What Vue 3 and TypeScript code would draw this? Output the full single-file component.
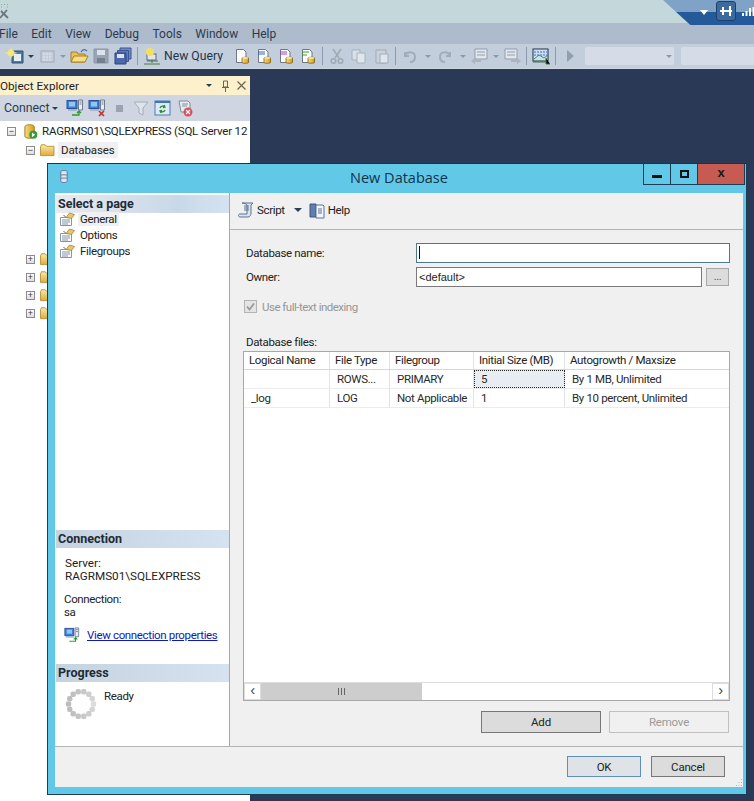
<script setup lang="ts">
const menus: string[] = ['File', 'Edit', 'View', 'Debug', 'Tools', 'Window', 'Help']
const spinner = Array.from({ length: 14 }, (_, i) => {
  const a = (i / 14) * Math.PI * 2
  return { x: 16 + Math.cos(a) * 12.5, y: 16 + Math.sin(a) * 12.5, o: 0.55 + 0.45 * Math.abs(Math.sin(a / 2)) }
})
const headers = [
  { t: 'Logical Name', c: 'c1' },
  { t: 'File Type', c: 'c2' },
  { t: 'Filegroup', c: 'c3' },
  { t: 'Initial Size (MB)', c: 'c4' },
  { t: 'Autogrowth / Maxsize', c: 'c5' }
]
const rows = [
  ['', 'ROWS...', 'PRIMARY', '5', 'By 1 MB, Unlimited'],
  ['_log', 'LOG', 'Not Applicable', '1', 'By 10 percent, Unlimited']
]
const cols = ['c1', 'c2', 'c3', 'c4', 'c5']
</script>

<template>
  <div class="screen">
    <svg class="defs" width="0" height="0">
      <defs>
        <linearGradient id="folderG" x1="0" y1="0" x2="0" y2="1"><stop offset="0" stop-color="#fbeaa8"/><stop offset="1" stop-color="#e0aa3c"/></linearGradient>
        <linearGradient id="dbG" x1="0" y1="0" x2="1" y2="0"><stop offset="0" stop-color="#f6dc84"/><stop offset="1" stop-color="#d99a1c"/></linearGradient>
        <symbol id="page" viewBox="0 0 16 16">
          <path d="M1.500 6.500h11v8h-11z" fill="#fff" stroke="#8a94a2"/>
          <path d="M3 9h8M3 11h8M3 13h6" stroke="#7f93ad"/>
          <path d="M7 6.500 10.500 2l5 1.500-3 4z" fill="#e8c860" stroke="#8c7a3a" stroke-width=".7"/>
          <path d="M6.500 6 4.500 4" stroke="#5c6672"/>
        </symbol>
        <symbol id="folder" viewBox="0 0 16 14">
          <path d="M.5 3V12.500h14.500V2.500H7L5.500.8H1.500z" fill="url(#folderG)" stroke="#b99238"/>
        </symbol>
        <symbol id="dbdoc" viewBox="0 0 16 16">
          <path d="M2.500 1.500h7l2.500 2.500v10.500h-9.500z" fill="#fdfdfd" stroke="#6d7786"/>
          <path d="M8 10c0-1 6.500-1 6.500 0v4.500c0 1-6.500 1-6.500 0z" fill="url(#dbG)" stroke="#7c5a0c" stroke-width=".8"/>
          <ellipse cx="11.250" cy="10" rx="3.200" ry="1" fill="#f8e79a"/>
        </symbol>
        <symbol id="network" viewBox="0 0 18 18">
          <rect x="1" y="1.500" width="10" height="8" fill="#3d82dd" stroke="#2b4f94"/>
          <rect x="3" y="3" width="6" height="4.500" fill="#8fc6f2"/>
          <rect x="2" y="10" width="9" height="2" fill="#aab6c6"/>
          <path d="M12.500 1h4v10h-4z" fill="#e8edf3" stroke="#6e7c90"/>
          <path d="M13.500 3h2M13.500 5h2" stroke="#6e7c90"/>
        </symbol>
      </defs>
    </svg>

    <header class="title-strip">
      <svg class="app-logo" viewBox="0 0 10 15" width="10" height="15">
        <path d="M0 14 7 6M1 7l7 7" stroke="#6c757e" stroke-width="1.800"/>
        <path d="M1 .5h1M4 .5h1M7 .5h1M1 3h1M7 3h1" stroke="#86b27a"/>
      </svg>
      <div class="account">
        <span class="acc-arrow"></span>
        <span class="acc-btn">
          <svg viewBox="0 0 14 10" width="14" height="10"><path d="M1 4h12v2H1zM3 1h2v8H3zM10 0h2v10h-2z" fill="#fff"/></svg>
        </span>
        <svg class="acc-bars" viewBox="0 0 12 9" width="12" height="9"><path d="M0 6h2v3H0zM3.500 4h2v5h-2zM7 1h2v8H7zM10.500 0H12v9h-1.500z" fill="#fff"/></svg>
      </div>
    </header>

    <nav class="menu-bar">
      <span v-for="m in menus" :key="m" class="menu-item">{{ m }}</span>
    </nav>

    <div class="toolbar">
      <svg class="tool" viewBox="0 0 22 18"><path d="M8 4h11v12H8z" fill="#4f7ba6" stroke="#33506e"/><path d="M10 7h7v7h-7z" fill="#e6eef5"/><circle cx="7" cy="6" r="3.500" fill="#f6e36a"/><path d="M7 .5v11M1.500 6h11" stroke="#f6e98e"/></svg>
      <span class="dd"></span>
      <svg class="tool dim" viewBox="0 0 22 18"><rect x="5" y="4" width="13" height="11" fill="#c6cfda" stroke="#9aa6b4"/><path d="M7 7h9M7 10h9M7 13h9" stroke="#e6ecf2" stroke-dasharray="2 1"/></svg>
      <span class="dd dim-dd gap-r"></span>
      <svg class="tool" viewBox="0 0 22 18"><path d="M3 15V5h6l1 2h7v8z" fill="#e8c25a" stroke="#a67f26"/><path d="M3 15 6 9h14l-3 6z" fill="#f7dd84" stroke="#a67f26"/><path d="M13 5c2-3 4-3 6-1" stroke="#3f6fa8" fill="none" stroke-width="1.300"/></svg>
      <svg class="tool" viewBox="0 0 22 18"><path d="M4 2h14v14H4z" fill="#98a4b4" stroke="#8b96a6"/><path d="M7 3h8v5H7z" fill="#dde3ea"/><path d="M7 11h8v5H7z" fill="#75818f"/></svg>
      <svg class="tool" viewBox="0 0 22 18"><path d="M8 1h11v11H8z" fill="#6f8cc6" stroke="#3c5391"/><path d="M5.500 3.500h11v11h-11z" fill="#5f7dbd" stroke="#3c5391"/><path d="M3 6h11v11H3z" fill="#4a68ab" stroke="#2e437f"/><path d="M5 7h7v4H5z" fill="#d9e2f2"/></svg>
      <span class="sep"></span>
      <svg class="tool" viewBox="0 0 22 18"><path d="M6 14h11M11 11v5M3 17h16" stroke="#4d7a3c"/><rect x="6" y="7" width="9" height="6" fill="#dfe6ee" stroke="#59677a"/><circle cx="9" cy="5" r="4" fill="#f4df5c"/></svg>
      <span class="nq">New Query</span>
      <svg class="tool" viewBox="0 0 22 18"><use href="#dbdoc" x="3" y="1" width="16" height="16"/></svg>
      <svg class="tool" viewBox="0 0 22 18"><use href="#dbdoc" x="3" y="1" width="16" height="16"/><path d="M5 5h7M5 7h7" stroke="#2f6ac0"/></svg>
      <svg class="tool" viewBox="0 0 22 18"><use href="#dbdoc" x="3" y="1" width="16" height="16"/><path d="M5 5h7M5 7h7" stroke="#a63ec0"/></svg>
      <svg class="tool" viewBox="0 0 22 18"><use href="#dbdoc" x="3" y="1" width="16" height="16"/><path d="M5 5h7M5 8h5" stroke="#3e9a3a"/></svg>
      <span class="sep"></span>
      <svg class="tool dim" viewBox="0 0 22 18"><path d="M7 2l6 9M15 2l-6 9" stroke="#9aa3ae" stroke-width="1.500"/><circle cx="7.500" cy="14" r="2.300" fill="none" stroke="#9aa3ae" stroke-width="1.500"/><circle cx="14.500" cy="14" r="2.300" fill="none" stroke="#9aa3ae" stroke-width="1.500"/></svg>
      <svg class="tool dim" viewBox="0 0 22 18"><path d="M4 3h8v10H4z" fill="#dce2ea" stroke="#a4adb9"/><path d="M9 6h8v10H9z" fill="#e6ebf1" stroke="#a4adb9"/></svg>
      <svg class="tool dim" viewBox="0 0 22 18"><path d="M6 3h10v13H6z" fill="#ccd3dd" stroke="#9da7b4"/><path d="M10 7h8v9h-8z" fill="#e6ebf1" stroke="#9da7b4"/></svg>
      <span class="sep"></span>
      <svg class="tool dim" viewBox="0 0 22 18"><path d="M6 5v4h4M6 9c2-5 10-5 10 1 0 3-2 5-5 5" fill="none" stroke="#9ca7b5" stroke-width="2"/></svg>
      <span class="dd dim-dd wide"></span>
      <svg class="tool dim" viewBox="0 0 22 18"><path d="M16 5v4h-4M16 9c-2-5-10-5-10 1 0 3 2 5 5 5" fill="none" stroke="#9ca7b5" stroke-width="2"/></svg>
      <span class="dd dim-dd wide"></span>
      <svg class="tool dim" viewBox="0 0 22 18"><path d="M6 2h12v10H6z" fill="#e8ecf1" stroke="#8995a5"/><path d="M8 5h8M8 8h8" stroke="#8995a5"/><path d="M2 14l4-3v2h6v2H6v2z" fill="#a6afbb"/></svg>
      <span class="dd dim-dd"></span>
      <svg class="tool dim" viewBox="0 0 22 18"><path d="M4 2h12v10H4z" fill="#e8ecf1" stroke="#8995a5"/><path d="M6 5h8M6 8h8" stroke="#8995a5"/><path d="M20 14l-4-3v2h-6v2h6v2z" fill="#a6afbb"/></svg>
      <span class="sep"></span>
      <svg class="tool" viewBox="0 0 22 18"><rect x="3" y="2" width="15" height="12" fill="#cfe0f4" stroke="#20304f"/><path d="M4 5h13M4 8h13" stroke="#3e6cbc" stroke-dasharray="2 1"/><path d="M4 12l5-4 5 3 4-3" fill="none" stroke="#3a9a48"/><path d="M16 11v6h4M3 15h13" stroke="#3a7d2e"/></svg>
      <span class="sep"></span>
      <svg class="tool" viewBox="0 0 22 18"><path d="M8 3l7 6-7 6z" fill="#929eae"/></svg>
      <span class="combo first"><span class="dd dim-dd"></span></span>
      <span class="combo second"></span>
    </div>

    <main class="workspace">
      <aside class="explorer">
        <div class="oe-head">
          <span class="oe-title">Object Explorer</span>
          <span class="oe-pin">
            <span class="dd dark"></span>
            <svg viewBox="0 0 9 12" width="9" height="12"><path d="M2.500 1h4v6h-4zM1 7.500h7M4.500 8v4" fill="none" stroke="#6b6552"/></svg>
            <svg viewBox="0 0 9 9" width="9" height="9"><path d="M.5.5l8 8M8.500.5l-8 8" stroke="#6b6552" stroke-width="1.200"/></svg>
          </span>
        </div>
        <div class="oe-tools">
          <span class="oe-connect">Connect</span>
          <span class="dd dark"></span>
          <svg class="oe-ic first" viewBox="0 0 18 18"><use href="#network" width="18" height="18"/><path d="M6 16h7v-4M11 14l2-2 2 2" fill="none" stroke="#2c9a32" stroke-width="1.300"/></svg>
          <svg class="oe-ic" viewBox="0 0 18 18"><use href="#network" width="18" height="18"/><path d="M11 12l5 5M16 12l-5 5" stroke="#d0282a" stroke-width="1.600"/></svg>
          <svg class="oe-ic" viewBox="0 0 18 18"><rect x="6" y="6" width="7" height="7" fill="#9aa3af"/></svg>
          <svg class="oe-ic" viewBox="0 0 18 18"><path d="M2 3h14l-5 6v7l-4-2V9z" fill="#dfe4ea" stroke="#a3acb8"/></svg>
          <svg class="oe-ic" viewBox="0 0 18 18"><rect x="1" y="2" width="15" height="14" fill="#dbe9f8" stroke="#4a7ab4"/><path d="M1 2h15v2H1z" fill="#3f74b8"/><path d="M6 9a3 3 0 0 1 5-1M11 11a3 3 0 0 1-5 1M10 6l1 2-2 .5M7 14l-1-2 2-.5" fill="none" stroke="#2e8a2c" stroke-width="1.300"/></svg>
          <svg class="oe-ic" viewBox="0 0 18 18"><path d="M3 2h9l2 2v9H5z" fill="#e8ecf2" stroke="#7f8a99"/><path d="M6 5h6M6 7h5" stroke="#7f8a99"/><circle cx="12" cy="13" r="4.500" fill="#d8505a"/><path d="M10 11l4 4M14 11l-4 4" stroke="#fff" stroke-width="1.200"/></svg>
        </div>
        <div class="tree">
          <div class="tree-row lvl0">
            <span class="exp">−</span>
            <svg class="tree-ic" viewBox="0 0 16 16"><path d="M2 3c0-3 10-3 10 0v10c0 3-10 3-10 0z" fill="url(#dbG)" stroke="#9c7a1c"/><circle cx="11" cy="11.500" r="4.300" fill="#2f9e3a"/><path d="M9.500 9l3.500 2.500L9.500 14z" fill="#fff"/></svg>
            <span class="tree-label">RAGRMS01\SQLEXPRESS (SQL Server 12</span>
          </div>
          <div class="tree-row lvl1">
            <span class="exp">−</span>
            <svg class="folder" viewBox="0 0 16 14"><use href="#folder" width="16" height="14"/></svg>
            <span class="tree-label selected">Databases</span>
          </div>
          <div class="tree-spacer"></div>
          <div v-for="n in 4" :key="n" class="tree-row lvl1 short">
            <span class="exp">+</span>
            <svg class="folder" viewBox="0 0 16 14"><use href="#folder" width="16" height="14"/></svg>
          </div>
        </div>
      </aside>

      <section class="dialog">
        <div class="dlg-title">
          <svg class="dlg-ic" viewBox="0 0 10 16" width="8" height="15"><path d="M1 2c0-2 8-2 8 0v12c0 2-8 2-8 0z" fill="#dfe6f0" stroke="#54688a"/><path d="M1 6h8M1 10h8" stroke="#54688a"/></svg>
          <span class="dlg-name">New Database</span>
          <div class="win-btns">
            <span class="wb min"><i></i></span>
            <span class="wb max"><i></i></span>
            <span class="wb close">x</span>
          </div>
        </div>

        <div class="dlg-client">
          <div class="dlg-body">
            <aside class="side">
              <div class="side-top">
                <h3 class="side-h first">Select a page</h3>
                <div class="page-row"><svg class="p-ic" viewBox="0 0 16 16"><use href="#page" width="16" height="16"/></svg><span class="active">General</span></div>
                <div class="page-row"><svg class="p-ic" viewBox="0 0 16 16"><use href="#page" width="16" height="16"/></svg><span>Options</span></div>
                <div class="page-row"><svg class="p-ic" viewBox="0 0 16 16"><use href="#page" width="16" height="16"/></svg><span>Filegroups</span></div>
              </div>
              <h3 class="side-h">Connection</h3>
              <div class="conn">
                <div class="conn-l upper">Server:<br />RAGRMS01\SQLEXPRESS</div>
                <div class="conn-l second">Connection:<br />sa</div>
                <div class="conn-link">
                  <svg viewBox="0 0 18 18" width="16" height="16"><use href="#network" width="18" height="18"/><path d="M6 16h7v-4M11 14l2-2 2 2" fill="none" stroke="#2c9a32" stroke-width="1.300"/></svg>
                  <a>View connection properties</a>
                </div>
              </div>
              <h3 class="side-h">Progress</h3>
              <div class="progress">
                <svg viewBox="0 0 32 32" width="32" height="32">
                  <rect v-for="(s, i) in spinner" :key="i" :x="s.x - 2.700" :y="s.y - 2.700" width="5.400" height="5.400" rx="2" fill="#bdbdbd" :opacity="s.o" />
                </svg>
                <span>Ready</span>
              </div>
            </aside>

            <div class="pane">
              <div class="script-bar">
                <svg class="scr-ic" viewBox="0 0 18 18" width="18" height="18"><path d="M5 2h11l-2 2v8c0 2-1 4-3 4H3c-2 0-2-3 0-3h7V4c0-1-3-2-5-2z" fill="#dbe5f0" stroke="#5a7294"/><path d="M7 5h5M7 7h5M7 9h5" stroke="#5a7294"/></svg>
                <span class="scr-t">Script</span>
                <span class="dd dark scr-dd"></span>
                <svg class="help-ic" viewBox="0 0 16 17" width="16" height="17"><path d="M1 2h6v13H1z" fill="#5f7fb0" stroke="#3b5580"/><path d="M7 3h7l1 1v12H7z" fill="#f2f5fa" stroke="#5c7092"/><path d="M9 7h4M9 9h4M9 11h4" stroke="#5c7092"/></svg>
                <span class="scr-t">Help</span>
              </div>

              <div class="form">
                <div class="f-row name-row">
                  <label>Database name:</label>
                  <div class="input focus"><span class="caret"></span></div>
                </div>
                <div class="f-row owner-row">
                  <label>Owner:</label>
                  <div class="input owner">&lt;default&gt;</div>
                  <span class="browse">...</span>
                </div>
                <div class="chk-row">
                  <svg class="chk" viewBox="0 0 13 13" width="13" height="13"><rect x=".5" y=".5" width="12" height="12" fill="#e4e4e4" stroke="#b4b4b4"/><path d="M3 6.500l2.500 3L10 3.500" fill="none" stroke="#9c9c9c" stroke-width="1.800"/></svg>
                  <span>Use full-text indexing</span>
                </div>
                <div class="files-l">Database files:</div>
                <div class="grid-box">
                  <div class="g-row g-head">
                    <div v-for="h in headers" :key="h.t" class="g-cell" :class="h.c">{{ h.t }}</div>
                  </div>
                  <div v-for="(r, ri) in rows" :key="ri" class="g-row">
                    <div v-for="(v, ci) in r" :key="ci" class="g-cell data" :class="[cols[ci], { cur: ri === 0 && ci === 3 }]">{{ v }}</div>
                  </div>
                  <div class="g-fill"></div>
                  <div class="hscroll">
                    <span class="sb-btn">‹</span>
                    <span class="sb-thumb">
                      <svg viewBox="0 0 7 7" width="7" height="7"><path d="M.5 0v7M3.500 0v7M6.500 0v7" stroke="#666"/></svg>
                    </span>
                    <span class="sb-track"></span>
                    <span class="sb-btn">›</span>
                  </div>
                </div>
                <div class="add-row">
                  <span class="btn add">Add</span>
                  <span class="btn off">Remove</span>
                </div>
              </div>
            </div>
          </div>
          <footer class="dlg-foot">
            <span class="btn ok">OK</span>
            <span class="btn cancel">Cancel</span>
            <svg class="grip" viewBox="0 0 9 9" width="9" height="9"><path d="M7 1h1v1H7zM4.500 4h1v1h-1zM7 4h1v1H7zM2 7h1v1H2zM4.500 7h1v1h-1zM7 7h1v1H7z" fill="#b8b8b8"/></svg>
          </footer>
        </div>
      </section>
    </main>
  </div>
</template>

<style>
html, body { margin: 0; padding: 0; background: #2a3a56; overflow: hidden; }
</style>

<style scoped>
.screen { width: 754px; height: 801px; display: flex; flex-direction: column; overflow: hidden; font-family: Roboto, "Liberation Sans", sans-serif; font-size: 11.5px; letter-spacing: -0.35px; color: #222; background: #2a3a56; }
.defs { position: absolute; }
.title-strip { height: 23px; background: #c4d7db; position: relative; flex: none; }
.app-logo { position: absolute; left: 0; top: 4px; }
.account { position: absolute; top: 0; right: 0; width: 91px; height: 25px; background: linear-gradient(#7ea3c6 0 46%, #245a9a 46% 100%); clip-path: polygon(0 0, 100% 0, 100% 100%, 30% 100%); z-index: 2; display: flex; align-items: center; }
.acc-arrow { margin-left: 37px; margin-bottom: 1px; border: 4px solid transparent; border-top: 5px solid #fff; border-bottom: 0; }
.acc-btn { margin-left: 8px; margin-top: -3px; width: 20px; height: 20px; border: 1px solid #1f3f6e; border-radius: 3px; box-sizing: border-box; display: flex; align-items: center; justify-content: center; background: #3c6a9f; }
.acc-bars { margin-left: 6px; margin-top: -2px; flex: none; }
.menu-bar { height: 21px; background: #aebbcc; display: flex; align-items: center; flex: none; font-size: 12px; letter-spacing: 0; color: #2c3a4c; }
.menu-item { margin-left: 13.500px; }
.menu-item:first-child { margin-left: -1px; }
.toolbar { height: 25px; background: #c2cedb; flex: none; display: flex; align-items: center; padding-left: 4px; border-bottom: 1px solid #cdd6e0; box-sizing: border-box; }
.tool { width: 22px; height: 18px; flex: none; }
.dim { opacity: .85; }
.dd { width: 0; height: 0; margin: 0 2px; border: 3px solid transparent; border-top: 3px solid #2f3d52; border-bottom: 0; flex: none; }
.dim-dd { border-top-color: #8d99a8; }
.toolbar > .gap-r { margin-right: 2px; }
.toolbar > .wide { margin: 0 2.500px 0 4.500px; }
.sep { width: 1px; height: 18px; background: #8e9aab; margin: 0 3px; flex: none; }
.nq { margin: 0 8px 0 1px; font-size: 12.200px; letter-spacing: 0; color: #26344a; white-space: nowrap; }
.combo { height: 18px; background: #d5dce7; border-radius: 2px; flex: none; display: flex; align-items: center; justify-content: flex-end; }
.combo.first { width: 89px; margin-left: 4px; }
.combo.second { width: 80px; margin-left: 7px; }
.workspace { flex: 1; position: relative; padding-top: 7px; }
.explorer { width: 250px; height: 100%; background: #fff; display: flex; flex-direction: column; border-radius: 2px 2px 0 0; }
.oe-head { height: 19px; background: #fdf0cc; display: flex; align-items: center; justify-content: space-between; flex: none; color: #1f1f1f; }
.oe-title { font-size: 11.700px; letter-spacing: 0; }
.oe-pin { display: flex; align-items: center; gap: 7px; padding-right: 4px; }
.oe-tools { height: 26px; background: #cfd6e1; display: flex; align-items: center; padding-left: 4px; flex: none; }
.oe-connect { color: #2a3a4c; font-size: 12.300px; letter-spacing: 0; }
.oe-ic { width: 18px; height: 18px; margin-left: 4px; flex: none; }
.oe-ic.first { margin-left: 6px; }
.tree { flex: 1; }
.tree-row { height: 18px; display: flex; align-items: center; }
.lvl0 { padding-left: 7px; height: 20px; }
.lvl1 { padding-left: 26px; }
.exp { width: 7px; height: 7px; border: 1px solid #8b8b8b; background: linear-gradient(#fff, #ddd); font-size: 9px; line-height: 7px; text-align: center; color: #333; flex: none; font-family: "Liberation Sans", sans-serif; letter-spacing: 0; }
.tree-ic { width: 15px; height: 15px; margin-left: 7px; flex: none; }
.folder { width: 15px; height: 13px; margin-left: 5px; flex: none; }
.tree-label { margin-left: 4px; white-space: nowrap; letter-spacing: -0.2px; }
.selected { background: #f0f0f0; padding: 1px 3px; margin-left: 3px; letter-spacing: -0.1px; }
.tree-spacer { height: 91px; }
.short { height: 18px; }
.dialog { position: absolute; left: 47px; top: 94px; width: 700px; height: 632px; box-sizing: border-box; border: 1px solid #1b3d55; border-top-color: #16364e; background: #62c8e8; display: flex; flex-direction: column; padding: 0 3px 7px 7px; }
.dlg-title { height: 29px; position: relative; flex: none; display: flex; align-items: center; justify-content: center; }
.dlg-ic { position: absolute; left: 5px; top: 5px; }
.dlg-name { font-size: 14.500px; letter-spacing: 0; color: #10344a; margin: 0 0 3px 0; font-family: "Open Sans", sans-serif; }
.win-btns { position: absolute; top: 0; right: -2px; display: flex; height: 20px; border: 1px solid #1b3d55; border-top: 0; }
.wb { display: flex; align-items: center; justify-content: center; width: 27px; box-sizing: border-box; border-right: 1px solid #1b3d55; }
.wb.close { width: 46px; border-right: 0; background: #c75b52; font-weight: 700; font-family: "Liberation Sans", sans-serif; font-size: 13px; color: #1a1a1a; line-height: 1; padding-bottom: 3px; }
.wb.min i { width: 10px; height: 3px; margin-top: 5px; background: #111; }
.wb.max i { width: 9px; height: 8px; box-sizing: border-box; border: 2px solid #111; }
.dlg-client { flex: 1; background: #f0f0f0; display: flex; flex-direction: column; min-height: 0; }
.dlg-body { flex: 1; display: flex; min-height: 0; border-bottom: 1px solid #b4b4b4; }
.side { width: 173px; background: #fff; border-right: 1px solid #a8a8a8; display: flex; flex-direction: column; flex: none; margin-left: 1px; }
.side-top { height: 337px; padding-top: 2px; box-sizing: border-box; flex: none; }
.side-h { margin: 0; height: 18px; line-height: 18px; font-size: 12.500px; letter-spacing: 0; font-weight: 700; padding-left: 2px; background: linear-gradient(90deg, #c5d3e0, #d5e3f0); color: #1e2a36; }
.side-h.first { background: linear-gradient(90deg, #e8eaee, #c9d8e8 70%, #d5e3f0); margin-bottom: -2px; }
.page-row { height: 16px; display: flex; align-items: center; padding-left: 3px; }
.p-ic { width: 16px; height: 16px; margin-right: 5px; flex: none; }
.active { background: #f0f0f0; padding: 0 2px; margin-left: -2px; }
.conn { height: 116px; padding: 9px 0 0 8px; box-sizing: border-box; flex: none; line-height: 13px; }
.conn-l { padding-left: 1px; }
.upper { font-size: 11.700px; letter-spacing: 0; }
.conn-l.second { margin-top: 10px; padding-left: 0; }
.conn-link { display: flex; align-items: center; gap: 7px; margin-top: 8px; }
.conn-link a { color: #0f19b8; text-decoration: underline; white-space: nowrap; }
.progress { flex: 1; display: flex; padding: 6px 0 0 9px; gap: 7px; }
.progress span { margin-top: 1px; }
.pane { flex: 1; display: flex; flex-direction: column; min-width: 0; }
.script-bar { height: 37px; box-sizing: border-box; border-bottom: 1px solid #b4b4b4; display: flex; align-items: center; padding: 0 0 2px 7px; flex: none; }
.scr-t { margin-left: 3px; }
.scr-ic + .scr-t { margin-left: 2px; }
.scr-dd { margin: 0 7px 0 9px; }
.scr-dd.dd { border-width: 4px 4px 0; }
.form { flex: 1; display: flex; flex-direction: column; padding: 12px 13px 0 14px; min-height: 0; }
.f-row { display: flex; align-items: center; }
.f-row label { width: 172px; flex: none; padding-left: 2px; box-sizing: border-box; }
.name-row { height: 21px; }
.owner-row { height: 21px; margin-top: 3px; }
.input { height: 20px; box-sizing: border-box; border: 1px solid #4b7a96; background: #fff; flex: 1; display: flex; align-items: center; padding-left: 2px; }
.input.owner { border-color: #7a7a7a; flex: none; width: 286px; font-family: "Liberation Sans", sans-serif; font-size: 11px; letter-spacing: 0; }
.caret { width: 1px; height: 13px; background: #111; }
.browse { width: 23px; height: 18px; box-sizing: border-box; margin-left: 4px; border: 1px solid #a8a8a8; background: #dcdcdc; text-align: center; line-height: 15px; color: #555; font-size: 11px; }
.chk-row { display: flex; align-items: center; gap: 5px; margin-top: 12px; color: #969696; height: 15px; letter-spacing: -0.5px; }
.files-l { margin-top: 21px; height: 14px; line-height: 14px; padding-left: 2px; }
.grid-box { margin-top: 2px; width: 487px; height: 350px; box-sizing: border-box; border: 1px solid #a8a8a8; background: #fff; display: flex; flex-direction: column; margin-left: -1px; }
.g-row { display: flex; height: 19px; flex: none; border-bottom: 1px solid #ececec; box-sizing: border-box; }
.g-head { height: 18px; border-bottom-color: #d8d8d8; }
.g-cell { box-sizing: border-box; padding-left: 5px; line-height: 17px; border-right: 1px solid #e2e2e2; white-space: nowrap; overflow: hidden; flex: none; }
.g-cell.data { padding-left: 7px; line-height: 18px; color: #2a2a2a; }
.c1 { width: 86px; }
.c2 { width: 60px; }
.c3 { width: 84px; }
.c4 { width: 91px; }
.c5 { width: 164px; border-right: 0; }
.cur { background: #e8edf2; outline: 1px dotted #222; outline-offset: -1px; }
.g-fill { flex: 1; }
.hscroll { height: 17px; display: flex; flex: none; background: #fff; border-top: 1px solid #ddd; }
.sb-btn { width: 17px; text-align: center; border: 1px solid #dcdcdc; box-sizing: border-box; font-size: 15px; line-height: 12px; color: #444; font-family: "Liberation Sans", sans-serif; }
.sb-thumb { width: 161px; background: #cdcdcd; display: flex; align-items: center; justify-content: center; }
.sb-track { flex: 1; }
.add-row { display: flex; margin-top: 10px; gap: 8px; margin-left: 237px; }
.btn { display: flex; align-items: center; justify-content: center; box-sizing: border-box; border: 1px solid #777; background: #dcdcdc; letter-spacing: -0.2px; }
.add { width: 120px; height: 22px; }
.off { width: 120px; height: 22px; border-color: #c0c0c0; background: #f0f0f0; color: #9a9a9a; }
.dlg-foot { height: 40px; box-sizing: border-box; flex: none; display: flex; align-items: center; justify-content: flex-end; gap: 10px; padding: 0 18px 1px 0; position: relative; }
.ok { width: 74px; height: 21px; border-color: #5d90b8; background: #dfe3e7; }
.cancel { width: 74px; height: 21px; }
.grip { position: absolute; right: 0; bottom: 0; }
</style>
